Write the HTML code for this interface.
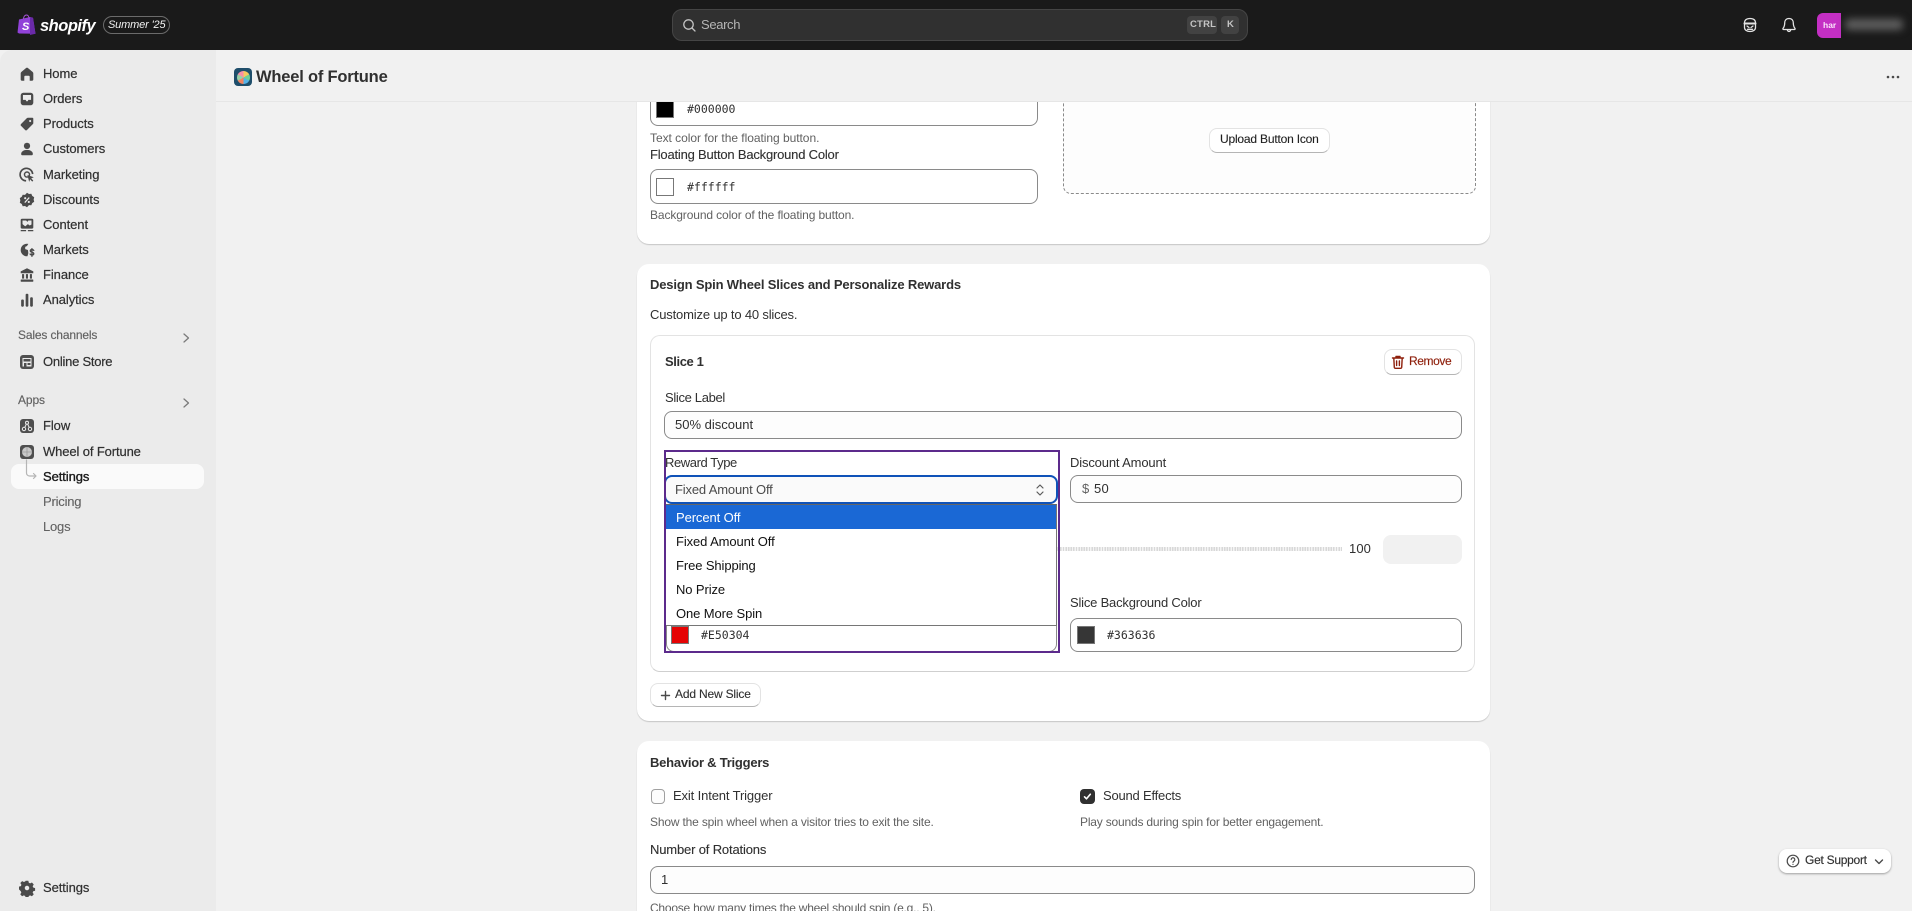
<!DOCTYPE html>
<html lang="en">
<head>
<meta charset="utf-8">
<title>Wheel of Fortune</title>
<style>
*{box-sizing:border-box}
html,body{margin:0;padding:0;width:1912px;height:911px;overflow:hidden}
body{position:relative;background:#f1f1f1;font-family:"Liberation Sans",sans-serif;font-size:13px;color:#303030}
div,span,svg{position:absolute}
#r{left:0;top:0;width:1912px;height:911px;overflow:hidden;background:#f1f1f1;letter-spacing:-.1px}
.t{white-space:nowrap;line-height:20px;height:20px}
.n{left:43px;color:#303030;-webkit-text-stroke:.2px #303030;letter-spacing:-.08px}
.h{color:#616161;font-size:12px;letter-spacing:-.18px}
.l{color:#303030;letter-spacing:-.2px;-webkit-text-stroke:.12px #303030}
.b{font-weight:700;letter-spacing:-.2px}
.m{font-family:"DejaVu Sans Mono",monospace;font-size:11.5px;color:#303030;letter-spacing:0}
.f{border:1px solid #8a8a8a;border-radius:8px;background:#fdfdfd}
.sw{border:1px solid #777}
.btn{background:#fff;border:1px solid #e3e3e3;border-bottom-color:#b5b5b5;border-radius:8px}
.ic{left:18px;width:18px;height:18px;fill:#4a4a4a}
.opt{left:676px;color:#111;font-size:13px;letter-spacing:-.1px}
</style>
</head>
<body>
<div id="r">

<!-- main cards -->
<div style="left:637px;top:60px;width:853px;height:184px;background:#fff;border-radius:12px;box-shadow:0 1px 1px rgba(0,0,0,.18)"></div>
<div style="left:637px;top:264px;width:853px;height:457px;background:#fff;border-radius:12px;box-shadow:0 1px 1px rgba(0,0,0,.18)"></div>
<div style="left:637px;top:741px;width:853px;height:200px;background:#fff;border-radius:12px;box-shadow:0 1px 1px rgba(0,0,0,.18)"></div>

<!-- card 1 -->
<div class="f" style="left:650px;top:90px;width:388px;height:36px;background:#fff"></div>
<div style="left:656px;top:100px;width:18px;height:18px;background:#000;border:1px solid #777"></div>
<span class="t m" style="left:687px;top:99px">#000000</span>
<span class="t h" style="left:650px;top:128px;letter-spacing:-.04px">Text color for the floating button.</span>
<span class="t l" style="left:650px;top:145px">Floating Button Background Color</span>
<div class="f" style="left:650px;top:169px;width:388px;height:35px;background:#fff"></div>
<div class="sw" style="left:656px;top:178px;width:18px;height:18px;background:#fff"></div>
<span class="t m" style="left:687px;top:177px">#ffffff</span>
<span class="t h" style="left:650px;top:205px;letter-spacing:-.11px">Background color of the floating button.</span>
<div style="left:1063px;top:70px;width:413px;height:124px;background:#fdfdfd;border:1px dashed #8a8a8a;border-radius:8px"></div>
<div class="btn" style="left:1209px;top:128px;width:121px;height:25px"></div>
<span class="t l" style="left:1220px;top:129px;color:#1f1f1f;font-size:12px;letter-spacing:-.19px">Upload Button Icon</span>

<!-- card 2 -->
<span class="t b" style="left:650px;top:275px;letter-spacing:-.16px">Design Spin Wheel Slices and Personalize Rewards</span>
<span class="t" style="left:650px;top:305px;letter-spacing:-.17px">Customize up to 40 slices.</span>
<div style="left:650px;top:335px;width:825px;height:337px;border:1px solid #e3e3e3;border-bottom-color:#cfcfcf;border-radius:10px;background:#fff"></div>
<span class="t b" style="left:665px;top:352px;letter-spacing:-.4px">Slice 1</span>
<div class="btn" style="left:1384px;top:349px;width:78px;height:26px"></div>
<svg style="left:1390px;top:354px;width:16px;height:16px" viewBox="0 0 16 16" fill="none" stroke="#8e1f0b" stroke-width="1.4" stroke-linecap="round" stroke-linejoin="round"><path d="M2.500 4h11M6 4V2.500h4V4M3.800 4l.5 9.200a1.200 1.200 0 001.200 1.100h5a1.200 1.200 0 001.200-1.100l.5-9.200M6.600 7v4.500M9.400 7v4.500"/></svg>
<span class="t" style="left:1409px;top:351px;color:#8e1f0b;font-size:12px;letter-spacing:-.4px;-webkit-text-stroke:.15px #8e1f0b">Remove</span>

<span class="t" style="left:665px;top:388px;letter-spacing:-.33px">Slice Label</span>
<div class="f" style="left:664px;top:411px;width:798px;height:28px"></div>
<span class="t" style="left:675px;top:415px;letter-spacing:0">50% discount</span>

<!-- discount -->
<span class="t" style="left:1070px;top:453px;letter-spacing:-.15px">Discount Amount</span>
<div class="f" style="left:1070px;top:475px;width:392px;height:28px"></div>
<span class="t" style="left:1082px;top:479px;color:#616161">$</span>
<span class="t" style="left:1094px;top:479px;letter-spacing:.3px">50</span>

<!-- slider -->
<div style="left:1055px;top:547px;width:287px;height:4px;background:repeating-linear-gradient(90deg,#d8d8d8 0 1.4px,#f4f4f4 1.4px 2.6px)"></div>
<span class="t" style="left:1349px;top:539px;letter-spacing:.1px">100</span>
<div style="left:1383px;top:535px;width:79px;height:29px;background:#f1f1f1;border-radius:8px"></div>

<span class="t" style="left:1070px;top:593px;letter-spacing:-.2px">Slice Background Color</span>
<div class="f" style="left:1070px;top:618px;width:392px;height:34px;background:#fff"></div>
<div class="sw" style="left:1077px;top:626px;width:18px;height:18px;background:#363636"></div>
<span class="t m" style="left:1107px;top:625px">#363636</span>

<!-- reward type with purple outline -->
<div class="f" style="left:666px;top:618px;width:391px;height:34px;background:#fff"></div>
<div class="sw" style="left:671px;top:626px;width:18px;height:18px;background:#e50304"></div>
<span class="t m" style="left:701px;top:625px">#E50304</span>
<div style="left:665px;top:504px;width:392px;height:122px;background:#fff;border:1px solid #767676;border-top:1px solid #666"></div>
<div style="left:666px;top:505px;width:390px;height:24px;background:#1a68d5"></div>
<span class="t opt" style="top:508px;color:#fff">Percent Off</span>
<span class="t opt" style="top:532px">Fixed Amount Off</span>
<span class="t opt" style="top:556px">Free Shipping</span>
<span class="t opt" style="top:580px">No Prize</span>
<span class="t opt" style="top:604px">One More Spin</span>
<div style="left:664px;top:475px;width:394px;height:29px;background:#fafafa;border:2px solid #0f52b8;border-radius:8px"></div>
<span class="t" style="left:675px;top:480px;color:#4a4a4a;letter-spacing:-.16px">Fixed Amount Off</span>
<svg style="left:1034px;top:482px;width:12px;height:16px" viewBox="0 0 12 16" fill="none" stroke="#5a5a5a" stroke-width="1.200" stroke-linecap="round" stroke-linejoin="round"><path d="M3 6l3-3 3 3M3 10l3 3 3-3"/></svg>
<span class="t" style="left:665px;top:453px;letter-spacing:-.41px">Reward Type</span>
<div style="left:664px;top:450px;width:396px;height:203px;border:2px solid #5c2a8c"></div>

<!-- add slice -->
<div class="btn" style="left:650px;top:683px;width:111px;height:24px"></div>
<svg style="left:659px;top:689px;width:13px;height:13px" viewBox="0 0 13 13" stroke="#4a4a4a" stroke-width="1.400" stroke-linecap="round"><path d="M6.500 2.500v8M2.500 6.500h8"/></svg>
<span class="t l" style="left:675px;top:684px;font-size:12px;letter-spacing:-.18px">Add New Slice</span>

<!-- card 3 -->
<span class="t b" style="left:650px;top:753px;letter-spacing:-.23px">Behavior &amp; Triggers</span>
<div style="left:651px;top:789px;width:14px;height:15px;border:1px solid #a0a0a0;border-radius:4px;background:#fdfdfd"></div>
<span class="t" style="left:673px;top:786px;letter-spacing:-.13px">Exit Intent Trigger</span>
<div style="left:1080px;top:789px;width:15px;height:15px;border-radius:4px;background:#303030"></div>
<svg style="left:1080px;top:789px;width:15px;height:15px" viewBox="0 0 15 15" fill="none" stroke="#fff" stroke-width="1.600" stroke-linecap="round" stroke-linejoin="round"><path d="M4.500 7.800l2 2 3.800-4.600"/></svg>
<span class="t" style="left:1103px;top:786px;letter-spacing:-.2px">Sound Effects</span>
<span class="t h" style="left:650px;top:812px;letter-spacing:-.17px">Show the spin wheel when a visitor tries to exit the site.</span>
<span class="t h" style="left:1080px;top:812px;letter-spacing:-.19px">Play sounds during spin for better engagement.</span>
<span class="t l" style="left:650px;top:840px;letter-spacing:-.16px">Number of Rotations</span>
<div class="f" style="left:650px;top:866px;width:825px;height:28px"></div>
<span class="t" style="left:661px;top:870px">1</span>
<span class="t h" style="left:650px;top:898px;letter-spacing:-.23px">Choose how many times the wheel should spin (e.g., 5).</span>

<!-- page header -->
<div style="left:216px;top:50px;width:1696px;height:52px;background:#f1f1f1;border-bottom:1px solid #e6e6e6"></div>
<div style="left:234px;top:68px;width:18px;height:18px;border-radius:4px;background:#1f4e6b"></div>
<div style="left:236.500px;top:70.500px;width:13px;height:13px;border-radius:50%;background:conic-gradient(#f6c85f 0 60deg,#6fcf97 60deg 120deg,#56b4e9 120deg 180deg,#f4845f 180deg 240deg,#9ad0a5 240deg 300deg,#f78fa7 300deg 360deg)"></div>
<span class="t" style="left:256px;top:67px;font-size:16.500px;font-weight:700;letter-spacing:-.2px;color:#303030">Wheel of Fortune</span>
<svg style="left:1884px;top:74px;width:18px;height:6px" viewBox="0 0 18 6" fill="#4a4a4a"><circle cx="4" cy="3" r="1.300"/><circle cx="9" cy="3" r="1.300"/><circle cx="14" cy="3" r="1.300"/></svg>

<!-- support -->
<div style="left:1779px;top:849px;width:112px;height:24px;background:#fff;border-radius:8px;box-shadow:0 1px 2px rgba(0,0,0,.35)"></div>
<svg style="left:1786px;top:854px;width:14px;height:14px" viewBox="0 0 14 14" fill="none" stroke="#4a4a4a" stroke-width="1.200" stroke-linecap="round"><circle cx="7" cy="7" r="5.800"/><path d="M5.200 5.500a1.800 1.800 0 113 1.400c-.7.500-1.200.8-1.200 1.500M7 10.300v.1"/></svg>
<span class="t" style="left:1805px;top:850px;font-size:12px;letter-spacing:-.27px;-webkit-text-stroke:.15px #303030">Get Support</span>
<svg style="left:1873px;top:857px;width:12px;height:10px" viewBox="0 0 12 10" fill="none" stroke="#4a4a4a" stroke-width="1.400" stroke-linecap="round" stroke-linejoin="round"><path d="M2.500 3l3.500 3.500L9.500 3"/></svg>

<!-- top bar -->
<div style="left:0;top:0;width:1912px;height:50px;background:#1a1a1a"></div>
<svg style="left:17px;top:14px;width:20px;height:22px" viewBox="0 0 20 22"><path d="M2 5.500l11-2.500 3 .8 2.500 16-16.500-.3-1.500-1z" fill="#9142d8"/><path d="M13 3l3 .8 2.500 16-5.500 1.200z" fill="#6a2aa8"/><path d="M6.500 5c0-2.500 1.500-4 3-4s2.500 1.500 2.500 3.500" fill="none" stroke="#a855d8" stroke-width="1"/><text x="5" y="16" fill="#fff" font-family="Liberation Sans" font-weight="700" font-style="italic" font-size="11">S</text></svg>
<span class="t" style="left:40px;top:15px;color:#fff;font-size:16.500px;font-weight:700;font-style:italic;letter-spacing:-.5px;height:22px;line-height:22px">shopify</span>
<div style="left:103px;top:16px;width:67px;height:18px;border:1px solid #6b6b6b;border-radius:9px"></div>
<span class="t" style="left:108px;top:15px;color:#f1f1f1;font-size:11px;font-style:italic;letter-spacing:-.15px">Summer '25</span>

<div style="left:672px;top:9px;width:576px;height:32px;background:#303030;border:1px solid #454545;border-radius:10px"></div>
<svg style="left:682px;top:18px;width:15px;height:15px" viewBox="0 0 15 15" fill="none" stroke="#c4c4c4" stroke-width="1.300" stroke-linecap="round"><circle cx="6.500" cy="6.500" r="4.700"/><path d="M10 10l3 3"/></svg>
<span class="t" style="left:701px;top:15px;color:#b5b5b5;letter-spacing:-.35px">Search</span>
<div style="left:1187px;top:16px;width:30px;height:18px;background:#424242;border-radius:4px"></div>
<span class="t" style="left:1190px;top:15px;color:#c4c4c4;font-size:9.500px;font-weight:700;letter-spacing:.2px">CTRL</span>
<div style="left:1221px;top:16px;width:18px;height:18px;background:#424242;border-radius:4px"></div>
<span class="t" style="left:1227px;top:15px;color:#c4c4c4;font-size:9.500px;font-weight:700">K</span>

<svg style="left:1741px;top:16px;width:18px;height:18px" viewBox="0 0 18 18" fill="none" stroke="#e3e3e3" stroke-width="1.300" stroke-linecap="round" stroke-linejoin="round"><path d="M3.500 7c0-3 2-4.500 5.500-4.500S14.500 4 14.500 7v4.500c0 2.500-2.500 4-5.500 4s-5.500-1.500-5.500-4z"/><path d="M3.500 7.500h11" stroke-width="2"/><path d="M6 10l2 1.500M12 10l-2 1.500M6.500 13.300h5"/></svg>
<svg style="left:1780px;top:16px;width:18px;height:18px" viewBox="0 0 18 18" fill="none" stroke="#e3e3e3" stroke-width="1.300" stroke-linecap="round" stroke-linejoin="round"><path d="M9 2.500c-2.800 0-4.300 2-4.300 4.500 0 3-.7 4.200-1.700 5.500-.3.500 0 1 .5 1h11c.5 0 .8-.5.5-1-1-1.300-1.700-2.500-1.700-5.500 0-2.500-1.500-4.500-4.300-4.500z"/><path d="M7.300 13.800c.2 1 .8 1.700 1.700 1.700s1.500-.7 1.700-1.700"/></svg>
<div style="left:1817px;top:13px;width:24px;height:25px;background:#c42fc4;border-radius:6px 0 0 6px"></div>
<span class="t" style="left:1823px;top:15px;color:#fbe3fb;font-size:8.500px;font-weight:700;letter-spacing:0">har</span>
<div style="left:1845px;top:19px;width:58px;height:11px;background:#5e5e5e;border-radius:4px;filter:blur(4px)"></div>

<!-- sidebar -->
<div style="left:0;top:50px;width:216px;height:861px;background:#ebebeb;border-radius:12px 0 0 0"></div>

<svg class="ic" style="top:65px" viewBox="0 0 20 20"><path d="M9 3.300a1.500 1.500 0 012 0l5 4.200c.6.500 1 1.200 1 2V16a1.500 1.500 0 01-1.500 1.500H13V13a1 1 0 00-1-1H8a1 1 0 00-1 1v4.500H4.500A1.500 1.500 0 013 16V9.500c0-.8.400-1.500 1-2z"/></svg>
<span class="t n" style="top:64px">Home</span>
<svg class="ic" style="top:90px" viewBox="0 0 20 20"><path fill-rule="evenodd" d="M6 3h8a3 3 0 013 3v8a3 3 0 01-3 3H6a3 3 0 01-3-3V6a3 3 0 013-3zm-.5 2.500v5.500h3l.8 1.500h1.400l.8-1.500h3V5.500z"/></svg>
<span class="t n" style="top:89px">Orders</span>
<svg class="ic" style="top:115px" viewBox="0 0 20 20"><path fill-rule="evenodd" d="M11 3h5a1 1 0 011 1v5a1.500 1.500 0 01-.4 1l-6.600 6.600a1.500 1.500 0 01-2.100 0l-4.500-4.500a1.500 1.500 0 010-2.100L10 3.400A1.500 1.500 0 0111 3zm2.500 2.500a1.200 1.200 0 100 2.400 1.200 1.200 0 000-2.400z"/></svg>
<span class="t n" style="top:114px">Products</span>
<svg class="ic" style="top:140px" viewBox="0 0 20 20"><circle cx="10" cy="6.500" r="3.500"/><path d="M3.500 15.500c0-2.700 3-4.500 6.500-4.500s6.500 1.800 6.500 4.500c0 1-.7 1.500-1.500 1.500H5c-.8 0-1.500-.5-1.500-1.500z"/></svg>
<span class="t n" style="top:139px">Customers</span>
<svg class="ic" style="top:166px" viewBox="0 0 20 20"><path fill="none" stroke="#4a4a4a" stroke-width="1.800" d="M9 16.500a7 7 0 117.300-7.500"/><circle cx="10" cy="9.500" r="2.800" fill="none" stroke="#4a4a4a" stroke-width="1.600"/><path d="M10.500 10l7 2.500-2.800 1.200 2.300 2.500-1.200 1.200-2.300-2.500-1.100 2.800z"/></svg>
<span class="t n" style="top:165px">Marketing</span>
<svg class="ic" style="top:191px" viewBox="0 0 20 20"><path fill-rule="evenodd" d="M10 2l2.200 1.300 2.600-.2 1 2.300 2.200 1.500-.6 2.600.6 2.500-2.200 1.500-1 2.400-2.600-.2L10 18l-2.200-1.300-2.600.2-1-2.400L2 13l.6-2.500L2 7.900l2.200-1.500 1-2.300 2.600.2zM7 12.300l1 1 5-5.500-1-1zM8 6.800a1.200 1.200 0 100 2.400 1.200 1.200 0 000-2.400zm4 4.200a1.200 1.200 0 100 2.400 1.200 1.200 0 000-2.400z"/></svg>
<span class="t n" style="top:190px">Discounts</span>
<svg class="ic" style="top:216px" viewBox="0 0 20 20"><path fill-rule="evenodd" d="M4.500 3h11A1.500 1.500 0 0117 4.500v8a1.500 1.500 0 01-1.500 1.500h-11A1.500 1.500 0 013 12.500v-8A1.500 1.500 0 014.500 3zM5 5v4l3 2.500L11 9l2 1.500 2-1V5h-3.500l-1 1.500L9 5z"/><path d="M3 15.500h6v1.500H3zM11 15.500h6v1.500h-6z"/></svg>
<span class="t n" style="top:215px">Content</span>
<svg class="ic" style="top:241px" viewBox="0 0 20 20"><path fill-rule="evenodd" d="M10 3a7 7 0 011.500.2L10 5.500 8 6.500v2.500l3 1 .5 3.500-1 3.400L10 17a7 7 0 010-14z"/><path d="M7 4.500L4.500 7 7 10l1.500 4-1 2-3.500-3a7 7 0 010-6z"/><path fill="none" stroke="#4a4a4a" stroke-width="1.500" stroke-linecap="round" d="M17.500 10.500c-.5-.8-1.200-1-2-1-1 0-1.800.6-1.800 1.500 0 2 3.800 1 3.800 3 0 1-.9 1.500-1.900 1.500-.9 0-1.600-.3-2.100-1M15.500 8.500v8.500"/></svg>
<span class="t n" style="top:240px">Markets</span>
<svg class="ic" style="top:266px" viewBox="0 0 20 20"><path d="M10 2.500l7 3.500v2H3V6z"/><rect x="4.500" y="9" width="2.300" height="5"/><rect x="8.800" y="9" width="2.300" height="5"/><rect x="13.200" y="9" width="2.300" height="5"/><rect x="3" y="15" width="14" height="2.500" rx=".6"/></svg>
<span class="t n" style="top:265px">Finance</span>
<svg class="ic" style="top:291px" viewBox="0 0 20 20"><rect x="3.500" y="9.500" width="3" height="8" rx="1.200"/><rect x="8.500" y="3" width="3" height="14.500" rx="1.200"/><rect x="13.500" y="7" width="3" height="10.500" rx="1.200"/></svg>
<span class="t n" style="top:290px">Analytics</span>

<span class="t" style="left:18px;top:325px;font-size:12px;color:#616161;letter-spacing:-.15px;-webkit-text-stroke:.15px #616161">Sales channels</span>
<svg style="left:180px;top:331px;width:12px;height:14px" viewBox="0 0 12 14" fill="none" stroke="#7a7a7a" stroke-width="1.300" stroke-linecap="round" stroke-linejoin="round"><path d="M4 3l4.500 4L4 11"/></svg>
<svg style="left:20px;top:355px;width:14px;height:14px" viewBox="0 0 14 14"><rect width="14" height="14" rx="3" fill="#4f4f4f"/><path d="M2.500 3h9v8.500h-9z" fill="#ebebeb"/><path d="M3.500 4h7v2.500h-7zM4 8h2.500v3.500H4zM7.500 8h3v2h-3z" fill="#4f4f4f"/></svg>
<span class="t n" style="top:352px;letter-spacing:-.25px">Online Store</span>

<span class="t" style="left:18px;top:390px;font-size:12px;color:#616161;letter-spacing:-.1px;-webkit-text-stroke:.15px #616161">Apps</span>
<svg style="left:180px;top:396px;width:12px;height:14px" viewBox="0 0 12 14" fill="none" stroke="#7a7a7a" stroke-width="1.300" stroke-linecap="round" stroke-linejoin="round"><path d="M4 3l4.500 4L4 11"/></svg>
<svg style="left:20px;top:419px;width:14px;height:14px" viewBox="0 0 14 14"><rect width="14" height="14" rx="3" fill="#4f4f4f"/><g fill="none" stroke="#ebebeb" stroke-width="1"><circle cx="7" cy="3.800" r="1.500"/><circle cx="4" cy="10" r="1.700"/><circle cx="10" cy="10" r="1.700"/><path d="M6.300 5.200L4.800 8.500M7.700 5.200l1.500 3.300"/></g></svg>
<span class="t n" style="top:416px">Flow</span>
<svg style="left:20px;top:445px;width:14px;height:14px" viewBox="0 0 14 14"><rect width="14" height="14" rx="3" fill="#4f4f4f"/><circle cx="7" cy="7" r="5" fill="#c9c9c9"/><path d="M7 2v10M2 7h10" stroke="#9a9a9a" stroke-width=".8"/></svg>
<span class="t n" style="top:442px;letter-spacing:-.12px">Wheel of Fortune</span>

<div style="left:11px;top:464px;width:193px;height:25px;background:#fafafa;border-radius:8px"></div>
<svg style="left:24px;top:459px;width:14px;height:24px" viewBox="0 0 14 24" fill="none" stroke="#b5b5b5" stroke-width="1.200" stroke-linecap="round" stroke-linejoin="round"><path d="M2.500 1v13a3 3 0 003 3H12M9.500 14.500L12 17l-2.500 2.500"/></svg>
<span class="t n" style="top:467px;color:#1a1a1a;-webkit-text-stroke:.35px #1a1a1a">Settings</span>
<span class="t n" style="top:492px;color:#616161;-webkit-text-stroke:.1px #616161;letter-spacing:-.2px">Pricing</span>
<span class="t n" style="top:517px;color:#616161;-webkit-text-stroke:.1px #616161;letter-spacing:-.2px">Logs</span>

<svg class="ic" style="top:879px" viewBox="0 0 20 20"><path fill-rule="evenodd" d="M8.500 2.500h3l.5 2.200 1.500.7 2-1 2 2.200-1.200 1.900.6 1.500 2.100.6v3l-2.100.5-.6 1.500 1.200 1.900-2 2.200-2-1-1.500.7-.5 2.100h-3l-.5-2.100-1.500-.7-2 1-2-2.200 1.200-1.900-.6-1.500L1.100 12V9l2.100-.6.6-1.500L2.600 5l2-2.200 2 1 1.500-.7zM10 8a2.500 2.500 0 100 5 2.500 2.500 0 000-5z" transform="translate(0 -.5)"/></svg>
<span class="t n" style="top:878px">Settings</span>

</div>
</body>
</html>
